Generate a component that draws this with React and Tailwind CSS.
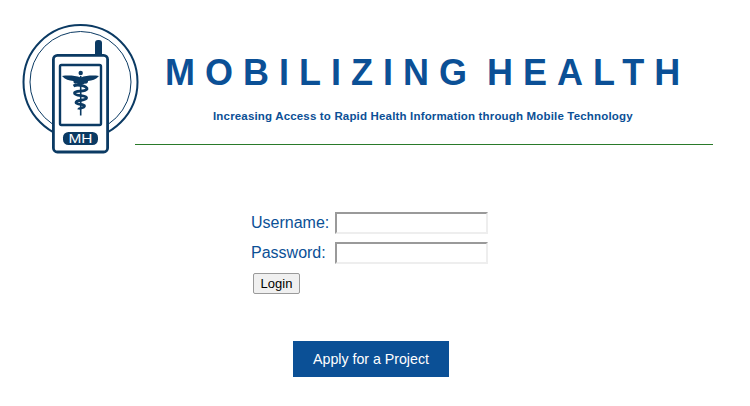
export default function App() {
  return (
    <div className="w-[750px] h-[406px] bg-white font-['Liberation_Sans',Arial,sans-serif] overflow-hidden">
      {/* Header */}
      <div className="flex h-[158px]">
        <svg className="shrink-0 mt-[22px] ml-[20px]" width="122" height="134" viewBox="20 22 122 134">
          <circle cx="80.5" cy="82" r="57" fill="none" stroke="#0b3a63" strokeWidth="2" />
          <circle cx="80.5" cy="82" r="50.5" fill="none" stroke="#0b3a63" strokeWidth="1" />
          <rect x="95" y="40" width="7" height="20" rx="3" fill="#0b3a63" />
          <rect x="53.4" y="55.4" width="54.2" height="96.6" rx="4" fill="#fff" stroke="#0b3a63" strokeWidth="2.8" />
          <rect x="60" y="65" width="41" height="60" rx="1.5" fill="#fff" stroke="#0b3a63" strokeWidth="2.4" />
          <rect x="63" y="132" width="35" height="13" rx="5.5" fill="#0b3a63" />
          <text x="80.5" y="143.2" textAnchor="middle" fontSize="13.5" fill="#fff" fontFamily="Liberation Sans" textLength="24" lengthAdjust="spacingAndGlyphs">MH</text>
          {/* caduceus */}
          <circle cx="80.7" cy="73" r="2.2" fill="#0b3a63" />
          <path d="M62 76 C68 75 75 75.5 80.7 77.5 C86 75.5 93 75 99 76 C96 79.5 92 80.5 88 81 C88.5 83 86 84 85 83.5 L81 85 L76.5 83.5 C75 84 73 83 73.5 81 C69 80.5 65 79.5 62 76 Z" fill="#0b3a63" />
          <rect x="79.9" y="76" width="1.6" height="39.5" fill="#0b3a63" />
          <path d="M73.5 86 C78 83.5 88 86.5 87 89 C85 92.5 75 90 74.5 93 C74.5 96.5 87 95 86.5 98 C86 101 76 99.5 76 102.5 C76 105 85 104 84.5 106 C84 108.5 79 107.5 78.5 109.5" fill="none" stroke="#0b3a63" strokeWidth="2.8" />
        </svg>
        <div className="flex-1 min-w-0 flex flex-col mr-[37px] border-b border-[#2a7a2a] h-[145px] -ml-[7px]">
          <h1 className="mt-[50px] ml-[30px] text-[36px] leading-[46px] font-bold text-[#0b5096] tracking-[10px] [word-spacing:-10px] whitespace-nowrap">
            MOBILIZING HEALTH
          </h1>
          <p className="mt-[13px] ml-[78px] text-[11.5px] leading-[14px] font-bold tracking-[0.17px] text-[#0b5096] whitespace-nowrap">
            Increasing Access to Rapid Health Information through Mobile Technology
          </p>
        </div>
      </div>

      {/* Login form */}
      <div className="ml-[251px] mt-[54px] flex flex-col">
        <div className="flex items-center h-[22px]">
          <label className="w-[84px] text-[16px] text-[#0b5096]">Username:</label>
          <input type="text" className="w-[153px] h-[22px] bg-white border-2 border-t-[#9a9a9a] border-l-[#9a9a9a] border-r-[#eeeeee] border-b-[#eeeeee]" />
        </div>
        <div className="flex items-center h-[22px] mt-[8px]">
          <label className="w-[84px] text-[16px] text-[#0b5096]">Password:</label>
          <input type="password" className="w-[153px] h-[22px] bg-white border-2 border-t-[#9a9a9a] border-l-[#9a9a9a] border-r-[#eeeeee] border-b-[#eeeeee]" />
        </div>
        <button className="ml-[2px] mt-[9px] w-[47px] h-[21px] rounded-[2px] border border-[#9a9a9a] bg-[#f0f0f0] text-[13px] leading-none text-black">
          Login
        </button>
      </div>

      {/* Apply */}
      <div className="ml-[293px] mt-[47px]">
        <a className="flex items-center justify-center w-[156px] h-[36px] pt-[1px] bg-[#0b5096] text-[14.2px] text-white">
          Apply for a Project
        </a>
      </div>
    </div>
  );
}
